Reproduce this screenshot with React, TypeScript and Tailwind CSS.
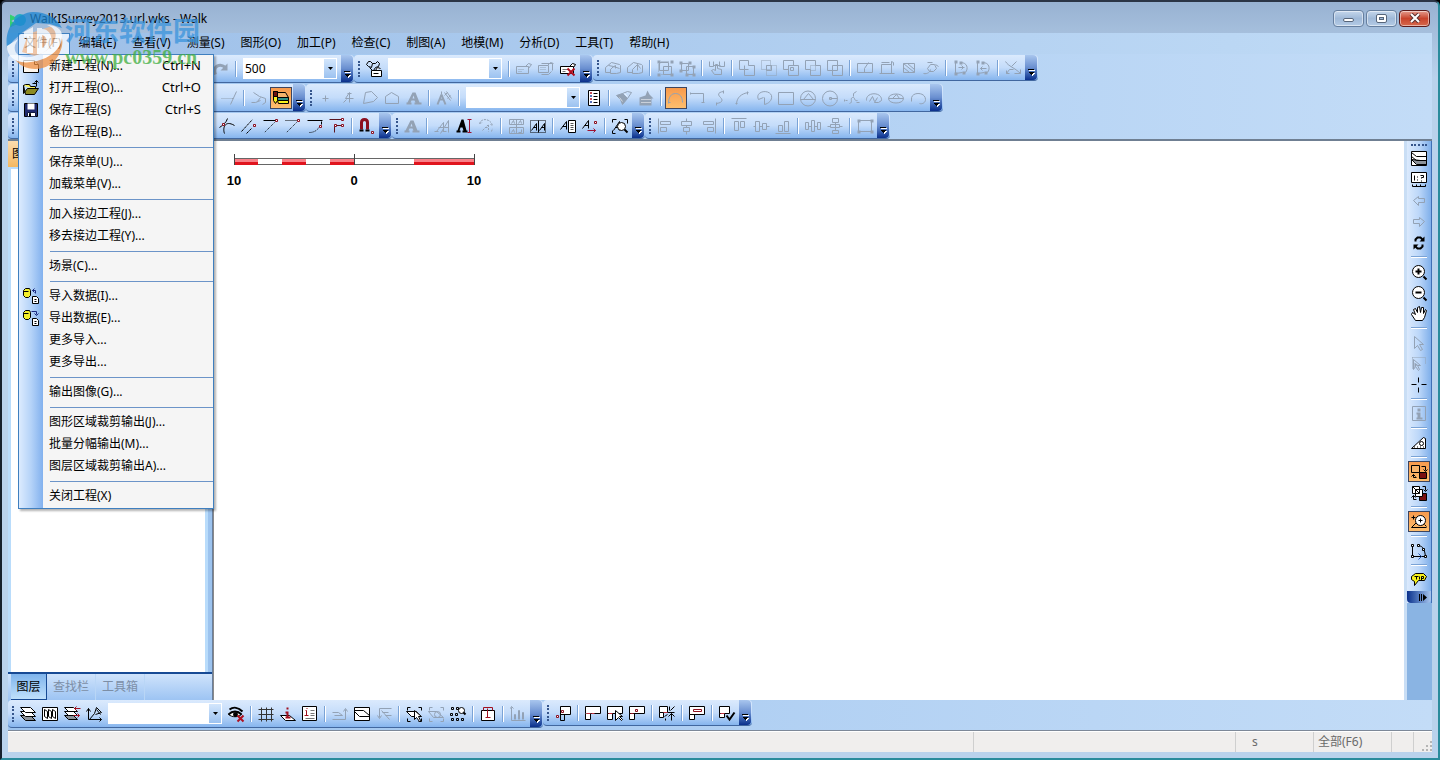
import React from 'react';
import clsx from 'clsx';

const dots = 'stroke-current [stroke-dasharray:1_1]';
const node = 'fill-white stroke-[#8b1020]';
const solid = 'fill-current stroke-none';

// All glyphs live on a 16x16 grid
const icons: Record<string, React.ReactNode> = {
  redo: (
    <>
      <path d="M2 13C-1 5 6 1 12 6" strokeWidth="3" />
      <path d="M14 2v7H7z" className={solid} />
    </>
  ),
  binoculars: (
    <>
      <path d="M0 3l2-3h2l2 2-1 4-3-1zM6 2h3l2-2 2 2-1 3-3 1M3 6l3 3M9 6L7 9" />
      <path d="M5 9h10v6H5zM9 9l2-3 3 1" className="fill-white" />
      <path d="M7 12h5" />
    </>
  ),
  card: (
    <>
      <path d="M0 5h12v7H0zM9 5l3-3 3 1-3 4" />
      <path d="M2 8h6M2 10h4" className={dots} />
    </>
  ),
  cards: (
    <>
      <path d="M0 4h10v7H0zM3 2h11v7M3 13h7l3-3M9 4l3-3 3 1" />
      <path d="M2 6h6M2 8h6" className={dots} />
    </>
  ),
  cardX: (
    <>
      <path d="M0 5h13v7H0zM9 5l3-3 3 1-2 3" className="fill-white" />
      <path d="M2 8h6M2 10h3" className="stroke-[#777]" />
      <path d="M7 7l7 7M14 7l-7 7" strokeWidth="2" className="stroke-[#b01020]" />
    </>
  ),
  house: <path d="M0 7l6-5 8 2 1 1v7l-4 1H5V9M0 7v5h5M5 9l3-3 6 2M3 5l5 1-3 3M10 8V5L7 7" />,
  house2: <path d="M0 7l6-5 8 2 1 1v7l-4 1H5V9M0 7v5h5M5 9l5-5 3 4M10 4v6" />,
  group: (
    <>
      <path d="M2 2h9v8H2zM6 6h8v8H6z" />
      <path d="M0 0h3v3H0zM13 0h3v3h-3zM0 13h3v3H0zM13 13h3v3h-3z" className={solid} />
      <path d="M1 4v8M4 1h8M4 14h8" className={dots} />
    </>
  ),
  ungroup: (
    <>
      <path d="M2 3h7v7H2zM7 6h7v8H7z" />
      <path d="M0 1h3v3H0zM9 1h3v3H9zM0 9h3v3H0zM13 5h3v3h-3zM6 13h3v3H6zM13 13h3v3h-3z" className={solid} />
    </>
  ),
  touch: <path d="M0 1v5h4V1M10 1v5h5V1M5 14L2 10l2-1 2 1V4h2v4l4 1v5zM4 5h7" />,
  union: <path d="M0 0h9v5h6v10H5V9H0zM5 5v4h4" />,
  unionDots: (
    <>
      <path d="M0 0h9v9H0zM5 5h10v10H5z" className={dots} />
      <path d="M5 5h5v5H5z" />
    </>
  ),
  subtract: (
    <>
      <path d="M0 0h10v5M0 0v9h5M5 5h10v10H5z" />
      <path d="M7 7h3v3H7z" />
    </>
  ),
  exclude: (
    <>
      <path d="M0 0h10v5h5v10H5V9H0z" />
      <path d="M5 5h5v5H5z" className={dots} />
    </>
  ),
  intersect: <path d="M0 0h10v10H0zM5 5h10v10H5z" />,
  splitBox: <path d="M0 3h15v9H0zM7 12V8l4-6" />,
  cropBox: <path d="M2 4h10v9H2zM0 13h15M12 4V1M2 2h8M12 1l2 1v3" />,
  hatch: <path d="M2 3h11v9H2zM2 3l11 9M6 3l7 6M2 7l6 5" />,
  curvePoint: <path d="M0 13c4 1 7-2 7-4M4 8l3-4h4l2 4-3 3H6zM12 4l3 2M4 2h5" />,
  pathDots: (
    <>
      <path d="M2 2v11M2 13l7-1M7 2c7 0 8 6 5 10M5 7h6M8 5l2 2-2 2" />
      <path d="M1 0h3v3H1zM6 1h3v3H6zM1 12h3v3H1zM9 11h3v3H9z" className={solid} />
    </>
  ),
  pathDots2: (
    <>
      <path d="M2 2v11M2 13l7-1M7 2c7 0 8 6 5 10M5 8h6M7 6L5 8l2 2" />
      <path d="M1 0h3v3H1zM6 1h3v3H6zM1 12h3v3H1zM9 11h3v3H9z" className={solid} />
    </>
  ),
  scatter: <path d="M0 1c3 5 9 6 15 12M6 6l5-5M1 13l3-4h4M9 13h6v-4M1 10v3h3" />,
  extend: (
    <>
      <path d="M0 8h9" className={dots} />
      <path d="M9 14l6-13M10 8h2" />
    </>
  ),
  branch: <path d="M2 2l6 4 6 2v4l-3 2M0 12h4l5-2M9 7l-3 4" />,
  layersPen: (
    <>
      <path d="M4 2h8l3 5H4z" className="fill-[#f5b26b]" />
      <path d="M4 7h11v3H4z" className="fill-[#2f8f86]" />
      <path d="M4 10h11v3H5z" className="fill-[#f8f01c]" />
      <path d="M0 1h4v9l-2 3-2-3z" className="fill-[#f8f01c]" />
      <path d="M0 1h4v5H0z" className="fill-[#6b1010]" />
    </>
  ),
  plus: <path d="M7 5v6M4 8h6" />,
  four: <path d="M9 12V2L5 8h8M7 3h4M3 12l3-3" />,
  polygon: <path d="M3 2l6-1 6 6-4 4-10 2z" />,
  pentagon: <path d="M1 13V6l6-4 7 4v7z" />,
  textA: <path d="M6 2h3l4 10h2v2H8v-2h1l-1-2H5l-1 2h1v2H0v-2h1zM6 8h2L7 5z" className={solid} />,
  compass: (
    <>
      <path d="M1 14L5 4M5 4l4 10M3 9h4" strokeWidth="2" />
      <path d="M5 1v3M8 2l6 8M10 1l5 7M8 5l3-3M11 8l3-3" />
    </>
  ),
  list: (
    <>
      <path d="M2 0h11v15H2z" className="fill-white" />
      <path d="M7 3h4M7 6h4M7 9h4M7 12h4" />
      <path d="M4 2h1v1H4zM4 8h1v1H4z" className="stroke-[#b01020]" />
      <path d="M4 5h1v1H4zM4 11h1v1H4z" className="stroke-[#2040a0]" />
    </>
  ),
  brush: (
    <>
      <path d="M0 5l6-2 5 5-5 6-2-5z" className="fill-current" />
      <path d="M6 3l5-2 4 1-4 6" />
      <path d="M8 3l3 3M3 7l3 4" className="stroke-white/60" />
    </>
  ),
  grassBox: (
    <>
      <path d="M9 0l2 4 4 4h-2v7H1V7l6-2z" className={solid} />
      <path d="M3 9h9M3 12h9" className="stroke-white [stroke-dasharray:1_1]" />
    </>
  ),
  arcOpen: <path d="M0 13c0-7 3-10 7-10s7 3 7 9M0 12h2" />,
  lineRight: <path d="M0 3h13v9M11 12h3M0 2v2" />,
  sCurve: <path d="M11 1c-7 1-5 4-3 6s3 5-4 6M4 12v3M11 0v3" />,
  arc: <path d="M2 14C2 7 7 3 14 2M1 13h2M13 1v3" />,
  pie: <path d="M7 7L2 9C-2 1 12-2 15 5c1 5-3 8-7 9V7" />,
  rect: <path d="M0 2h15v12H0z" />,
  circleTri: <path d="M0 8a7 7 0 1 0 15 0A7 7 0 1 0 0 8zM0 9h15M3 9l5-6 5 6" />,
  circleR: <path d="M0 8a7 7 0 1 0 15 0A7 7 0 1 0 0 8zM8 8h7M7 7h2v2H7z" />,
  spline: <path d="M5 13c4-1 0-5 3-6s1 4 5 3M9 3l3-2M9 3v3M1 10h2M0 9v2M12 12h3" />,
  ellipseArc: <path d="M0 10c-1-9 16-9 15 0l-3 2H8l3-5M3 11l3-5 2 5" />,
  ellipse: <path d="M0 8c0-6 15-6 15 0S0 14 0 8zM0 8h15M4 8l4-4 3 4" />,
  arcLow: <path d="M1 9c-1-8 14-8 14 0 0 3-3 5-6 4M1 8v3" />,
  curveNode: (
    <>
      <path d="M5 15C3 10 5 1 15 7M0 9c3-2 7-5 8-9" />
      <path d="M3 5h2v2H3z" className={node} />
    </>
  ),
  parallel: (
    <>
      <path d="M0 13L11 1M5 15l5-5" className="[stroke-dasharray:3_1]" />
      <path d="M12 6h2v2h-2z" className={node} />
    </>
  ),
  lineCorner: (
    <>
      <path d="M0 2h12" />
      <path d="M11 4L1 14" className={dots} />
      <path d="M12 1h2v2h-2z" className={node} />
    </>
  ),
  lineCorner2: (
    <>
      <path d="M0 2h12M11 4L1 14" className={dots} />
      <path d="M12 1h2v2h-2z" className={node} />
    </>
  ),
  lineBelow: (
    <>
      <path d="M0 2h15M14 3v3" />
      <path d="M2 14c4 0 8-2 10-6" className={dots} />
      <path d="M12 7h2v2h-2z" className={node} />
    </>
  ),
  lineStep: (
    <>
      <path d="M0 1h12M5 14V7h8" className="stroke-[#5a1520]" />
      <path d="M12 0h2v2h-2zM5 6h2v2H5zM12 6h2v2h-2z" className={node} />
    </>
  ),
  magnet: (
    <>
      <path d="M2 11V4c0-4 6-4 6 0v7" strokeWidth="3" className="stroke-[#8c1020]" />
      <path d="M0 11h4v2H0zM6 11h4v2H6z" className={solid} />
      <path d="M12 13h2v2h-2z" className={node} />
    </>
  ),
  textSlash: <path d="M0 13h4M2 13L9 4v9M4 9h5M8 13h4M6 15l8-13v12M10 9h4" />,
  textHeight: (
    <>
      <path d="M5 1h2l3 11h1v2H6v-2h1L6 9H4l-1 3h1v2H0v-2h1z" className={solid} />
      <path d="M11 1h4M11 14h4M13 1v13" className="stroke-[#a01030]" />
    </>
  ),
  textRotate: <path d="M1 5C3-1 12 0 14 7l-2-1M1 5l3-1M4 12l6-6v7M7 9h3M13 13l1-3" className="[stroke-dasharray:2_1]" />,
  textBoxes: <path d="M1 1h14v5H1zM1 9h14v6H1zM8 1v14M3 5l2-3 1 3M10 5l2-3 1 3M3 14l2-3 1 3M10 14h3v-3" />,
  textBoxes2: (
    <>
      <path d="M0 2h15v12H0z" className={dots} />
      <path d="M1 12L6 5v7M3 9h3M9 12l5-7v7M11 9h3M8 2v12" />
    </>
  ),
  textList: (
    <>
      <path d="M0 11L6 3v8M2 8h4" />
      <path d="M8 2h7v12H8z" className="fill-white" />
      <path d="M10 5h3M10 7h3M10 9h3M10 11h3" className="stroke-[#555]" />
    </>
  ),
  textArrow: (
    <>
      <path d="M0 10l6-8v8M2 7h4" />
      <path d="M5 12h8M11 10l2 2-2 2" className="stroke-[#a01030]" />
      <path d="M12 3h2v2h-2z" className={node} />
    </>
  ),
  textZoom: (
    <>
      <path d="M0 4V1h4M12 1h3v4M0 12v3h3" />
      <path d="M1 12L7 3v9M3 9h3" />
      <circle cx="9" cy="8" r="4" className="fill-white" />
      <path d="M12 11l3 3" strokeWidth="2" />
    </>
  ),
  alignLeft: <path d="M1 0v15M3 3h10v3H3zM3 9h6v4H3z" />,
  alignCenter: <path d="M7 0v3M7 7v2M7 13v3M2 3h10v4H2zM4 9h6v4H4z" />,
  alignRight: <path d="M14 0v15M2 3h10v3H2zM6 9h6v4H6z" />,
  alignTop: <path d="M0 0h15M3 3h4v9H3zM9 3h4v6H9z" />,
  alignMiddle: <path d="M0 8h2M6 8h3M13 8h3M2 3h4v10H2zM9 5h4v6H9z" />,
  alignBottom: <path d="M0 15h15M3 7h4v6H3zM9 3h4v10H9z" />,
  distributeH: <path d="M0 4h3v7H0zM6 2h3v11H6zM12 4h3v7h-3zM3 8h3M9 8h3" />,
  distributeV: <path d="M5 0h6v4H5zM3 6h9v3H3zM5 12h6v3H5zM8 4v8M0 8h3M12 8h3" />,
  boundsBox: (
    <>
      <path d="M1 2h13v11H1z" />
      <path d="M0 1h3v3H0zM13 1h3v3h-3zM0 12h3v3H0zM13 12h3v3h-3z" className={solid} />
    </>
  ),
  layers: (
    <>
      <path d="M0 9l5 5h10l-5-5z" className="fill-[#8c9299]" />
      <path d="M0 5l5 5h10l-5-5z" className="fill-white" />
      <path d="M0 1l5 5h10l-5-5z" className="fill-white" />
    </>
  ),
  layersFrame: (
    <>
      <path d="M0 0h15v14H0z" className="fill-white" />
      <path d="M0 8l5 5h10V9H9z" className="fill-[#8c9299]" />
      <path d="M0 5l5 4h10M0 1l5 4h10" />
    </>
  ),
  layersVertical: (
    <>
      <path d="M0 1h15v13H0z" className="fill-white" />
      <path d="M2 3l3 2v7l-3-2zM6 3l3 2v7l-3-2zM10 3l3 2v7l-3-2z" />
    </>
  ),
  layersRed: (
    <>
      <path d="M0 9l4 4h9l-4-4z" className="fill-[#8c9299]" />
      <path d="M0 5l4 4h9L9 5zM0 1l4 4h9L9 1z" className="fill-white" />
      <path d="M10 2h6M12 0l-2 2 2 2M9 9h6M13 7l2 2-2 2" className="stroke-[#a01020]" />
    </>
  ),
  axes: <path d="M2 2v11h13M0 5l2-3 2 3M13 11l2 2-2 2M3 13l5-6 2-6 5 5-6 2M10 3l4 5" />,
  eyeX: (
    <>
      <path d="M0 8c4-4 10-4 13 0-4 3-9 3-13 0" className="fill-white" />
      <path d="M1 3c4-3 9-2 13 2M0 8c4-4 9-4 13 0" strokeWidth="2" />
      <circle cx="7" cy="8" r="2" className="fill-black" />
      <path d="M9 9l6 6M15 9l-6 6" strokeWidth="2" className="stroke-[#b01020]" />
    </>
  ),
  grid: <path d="M3 1v14M8 1v14M13 1v14M0 3h15M0 8h15M0 13h15" className="stroke-[#333]" />,
  infoPlane: (
    <>
      <path d="M0 9h9l6 5H5z" className="fill-white" />
      <path d="M7 5v6M5 11h5M5 6h2M7 1v2" strokeWidth="2" className="stroke-[#a01020]" />
    </>
  ),
  infoList: (
    <>
      <path d="M0 0h14v14H0z" className="fill-white" />
      <path d="M4 4v5M2 9h4M3 4h1M4 2h1" className="stroke-[#a01020]" />
      <path d="M8 4h4M8 7h4M8 9h4M3 12h9" className="stroke-[#777]" />
    </>
  ),
  stepUp: <path d="M0 6h6l4 3M0 13h13V3M11 5l2-3 2 3M2 9h8" />,
  wavesFrame: (
    <>
      <path d="M0 1h15v13H0z" className="fill-white" />
      <path d="M0 4h9l6 5M0 5l5 5h10" />
    </>
  ),
  stepDown: <path d="M3 2h12M3 2v9M1 9l2 3 2-3M6 6h6M5 4l8 9M9 9h6" />,
  selectPlane: (
    <>
      <path d="M1 4V1h3M12 1h3v3M15 12v3h-3M4 15H1v-3" />
      <path d="M0 5h10l4 5H5z" className="fill-white" />
      <path d="M8 4v9l2-2 3 4 1-1-2-4h3z" className="fill-white" />
    </>
  ),
  searchPlane: (
    <>
      <path d="M1 4V1h3M12 1h3v3M15 12v3h-3M4 15H1v-3M0 5h8l7 6H5z" />
      <circle cx="9" cy="8" r="3" />
    </>
  ),
  network: (
    <>
      <circle cx="11" cy="4" r="3" className="fill-white" />
      <path d="M13 6l2 2" strokeWidth="2" />
      <path d="M1 1h2v2H1zM6 1h2v2H6zM0 7h2v2H0zM5 7h2v2H5zM1 12h2v2H1zM6 12h2v2H6zM11 12h2v2h-2z" />
    </>
  ),
  textBox: (
    <>
      <path d="M1 4h13v10H1z" className="fill-white" />
      <path d="M7 2v9M3 4V1h9v3M5 11h5" className="stroke-[#a01020]" />
    </>
  ),
  bars: <path d="M1 1v13h14M4 13V8h1v5M8 13V4h1v9M12 13V6h1v7M0 2l1-2 2 2" />,
  flagNode: (
    <>
      <path d="M5 1h10v8H5z" className="fill-white" />
      <path d="M5 5v10h4V9" />
      <path d="M6 5h2v2H6zM1 10h2v2H1z" className={node} />
    </>
  ),
  flagRed: (
    <>
      <path d="M0 1h15v7H0z" className="fill-white" />
      <path d="M0 8v6h5V8" className="fill-white" />
      <path d="M1 8h4M6 8h3" className="stroke-[#c03040]" />
    </>
  ),
  flagCursor: (
    <>
      <path d="M0 1h15v7H0zM0 8h5v6H0z" className="fill-white" />
      <path d="M8 5v10l3-3 3 3 1-1-3-3h3z" className="fill-white" />
      <path d="M1 8h4" className="stroke-[#c03040]" />
    </>
  ),
  flagPoint: (
    <>
      <path d="M0 1h15v7H0zM0 8h5v6H0z" className="fill-white" />
      <path d="M6 4h2v2H6zM1 8h3" className={node} />
    </>
  ),
  flagBurst: (
    <>
      <path d="M0 1h8v6H0zM0 7h4v5H0z" className="fill-white" />
      <path d="M10 1v4M15 1l-4 4M8 7h7M12 15V8M9 11l3-3 3 3M5 11l3-2M6 15v-2" />
      <path d="M4 7h4" className="stroke-[#c03040]" />
    </>
  ),
  flagInner: (
    <>
      <path d="M0 1h15v8H0zM0 9h5v5H0z" className="fill-white" />
      <path d="M4 4h8v2H4z" className={node} />
    </>
  ),
  flagCheck: (
    <>
      <path d="M0 1h10v7H0zM0 8h5v4H0z" className="fill-white" />
      <path d="M7 10l3 4 5-7" strokeWidth="2" />
      <path d="M1 8h4" className="stroke-[#c03040]" />
    </>
  ),
  scale: (
    <>
      <path d="M0 0h15v10H0z" className="fill-white" />
      <path d="M3 3v5M6 4v1M6 7v1M9 3h3v2h-2v1M10 8v1M1 14h13M1 12v2M5 12v2M9 12v2M14 12v2" />
    </>
  ),
  arrowLeft: <path d="M2 7l5-4v2h6v4H7v3z" />,
  arrowRight: <path d="M13 7L8 3v2H2v4h6v3z" />,
  refresh: (
    <>
      <path d="M4 6V4l2-2h3l2 2M11 9v2l-2 2H6l-2-2" strokeWidth="2" />
      <path d="M13 1v5H8zM2 14V9h5z" className={solid} />
    </>
  ),
  zoomIn: (
    <>
      <circle cx="7" cy="7" r="6" className="fill-white" />
      <path d="M4 7h6M7 4v6M12 12l3 3" strokeWidth="2" />
    </>
  ),
  zoomOut: (
    <>
      <circle cx="7" cy="7" r="6" className="fill-white" />
      <path d="M4 7h6M12 12l3 3" strokeWidth="2" />
    </>
  ),
  hand: <path d="M4 14L0 8l1-2 3 2-2-5 2-1 2 4V1l2-1 1 6 1-5h2v6l2-4 1 1-2 7-2 3z" className="fill-white" />,
  cursor: <path d="M3 1v12l3-3 3 5 2-1-3-5h4z" />,
  cursorBox: (
    <>
      <path d="M1 1h13v7M1 1v12" className={dots} />
      <path d="M2 3v10l2-3 3 4 1-1-2-4h3z" />
      <path d="M3 6v5l2-2h2z" className={solid} />
    </>
  ),
  crosshair: <path d="M7 0v5M7 10v5M0 7h5M10 7h5" />,
  info: (
    <>
      <path d="M1 0h13v14H1z" />
      <path d="M6 2h3v3H6zM5 6h4v5h2v2H5v-2h1V8H5z" className={solid} />
    </>
  ),
  setSquare: (
    <>
      <path d="M0 13L12 2l2 1v10z" className="fill-white" />
      <circle cx="10" cy="8" r="2" />
      <path d="M3 12v-1M6 12v-1M9 12v-1M12 12v-1" />
    </>
  ),
  swap: (
    <>
      <path d="M0 1h8v7H0z" className="fill-[#f7b36a]" />
      <path d="M8 8h7v6H8z" className="fill-[#7a1010]" />
      <path d="M10 2h4v4M12 5l2 2 2-2M5 13H2v-3M0 12l2-2 2 2" />
    </>
  ),
  swapLayers: (
    <>
      <path d="M8 8h7v7H8z" className="fill-[#7a1010]" />
      <path d="M4 4h7v7H4zM1 1h7v7H1z" className="fill-white" />
      <path d="M1 1l7 7M11 1h3v4M12 4l2 2 2-2M5 14H2v-4M0 12l2-2 2 2" />
    </>
  ),
  zoomPath: (
    <>
      <path d="M0 3h4M2 1v4M0 13h15M0 13l6-6" />
      <circle cx="9" cy="6" r="5" className="fill-white" />
      <path d="M7 6h4M9 4v4M13 10l2 2" />
    </>
  ),
  editPath: (
    <>
      <path d="M1 2v11h13M7 2c5 1 6 4 7 11" />
      <path d="M0 1h2v2H0zM6 1h2v2H6zM0 12h2v2H0zM13 12h2v2h-2zM11 5h2v2h-2z" className="fill-white" />
      <path d="M7 10l3 3-3 3" className="stroke-[#2050b0]" />
    </>
  ),
  tip: (
    <>
      <path d="M0 4l4-3h8l3 3-2 4H7l-4 5V9L0 7z" className="fill-[#f6ef1a]" />
      <path d="M3 4h4M5 4v3M8 4v3M10 8V4h2v2h-2" />
    </>
  ),
  newFile: (
    <>
      <path d="M0 2h11l4 4v8H0z" className="fill-[#fdf6ee]" />
      <path d="M11 2v4h4" className="fill-white" />
    </>
  ),
  openFile: (
    <>
      <path d="M0 5l2-1h4l1 2h5v3" className="fill-[#f6f05a]" />
      <path d="M0 5v8l4-5h11l-4 6H2z" className="fill-[#8c8a20]" />
      <path d="M9 3h4v3M13 0v4M11 2l2-2 2 2" />
    </>
  ),
  saveFile: (
    <>
      <path d="M1 1h13v13H1z" className="fill-[#202a70]" />
      <path d="M4 1h7v6H4z" className="fill-white stroke-none" />
      <path d="M4 10h8v4H4z" className="fill-white stroke-[#101840]" />
      <path d="M6 11h1v3H6z" className="fill-black" />
    </>
  ),
  importData: (
    <>
      <path d="M0 2l2-2h4l1 2v5L5 9H2L0 7zM0 3h5" className="fill-[#f2ee2c]" />
      <path d="M9 8h4l2 2v5H9zM11 11h2M11 13h2" className="fill-white" />
      <path d="M12 5V2H9M11 0L9 2l2 2" className="stroke-[#1a2a80]" />
    </>
  ),
  exportData: (
    <>
      <path d="M0 2l2-2h4l1 2v5L5 9H2L0 7zM0 3h5" className="fill-[#f2ee2c]" />
      <path d="M9 8h4l2 2v5H9zM11 11h2M11 13h2" className="fill-white" />
      <path d="M8 1h5v3M11 3l2 2 2-2" className="stroke-[#1a2a80]" />
    </>
  ),
};

const Icon = ({ name }: { name: string }) => (
  <svg
    viewBox="0 0 16 16"
    className="size-4 shrink-0 overflow-visible"
    fill="none"
    stroke="currentColor"
    aria-hidden="true"
  >
    <g transform="translate(.5 .5)">{icons[name]}</g>
  </svg>
);

// '|' is a separator, a leading '-' means disabled, a leading '*' means pressed
const Tools = ({ items, vertical }: { items: string; vertical?: boolean }) => (
  <>
    {items.split(' ').map((item, i) => {
      if (item === '|') {
        return vertical ? (
          <span key={i} className="flex h-2 w-full items-center px-1">
            <span className="h-0.5 w-full border-t border-[#7aa3d6] bg-white" />
          </span>
        ) : (
          <span key={i} className="flex w-2 shrink-0 items-center justify-center">
            <span className="h-4 w-0.5 border-l border-[#7aa3d6] bg-white" />
          </span>
        );
      }
      const name = item.replace(/^[-*]+/, '');
      const disabled = item.includes('-');
      const active = item.includes('*');
      return (
        <button
          key={i}
          type="button"
          aria-label={name}
          disabled={disabled}
          className={clsx(
            'flex shrink-0 items-center justify-center',
            vertical ? 'h-[21px] w-[22px]' : 'h-[22px] w-[22px]',
            disabled ? 'text-[#93a2b5]' : 'text-black',
            active && 'border border-[#3c4560] bg-linear-to-b from-[#f89a4c] to-[#fdbe6e]',
          )}
        >
          <Icon name={name} />
        </button>
      );
    })}
  </>
);

const Combo = ({ label, value = '', narrow }: { label: string; value?: string; narrow?: boolean }) => (
  <div
    className={clsx(
      'relative mx-[3px] flex h-[21px] shrink-0 border border-white bg-white',
      narrow ? 'w-[94px]' : 'w-[114px]',
    )}
  >
    <select aria-label={label} className="w-full appearance-none bg-white px-px text-xs text-black outline-none">
      <option>{value}</option>
    </select>
    <span className="pointer-events-none absolute inset-y-0 right-0 flex w-3 items-center justify-center bg-linear-to-b from-[#d3e6fc] to-[#9cc2f0]">
      <svg viewBox="0 0 5 3" className="h-[3px] w-[5px]" aria-hidden="true">
        <path d="M0 0h5L2.5 3z" />
      </svg>
    </span>
  </div>
);

const Toolbar = ({ children, tall }: { children: React.ReactNode; tall?: boolean }) => (
  <div
    role="toolbar"
    className={clsx(
      'flex shrink-0 items-center rounded border-b border-[#41679f] bg-linear-to-b from-[#dbeafd] via-[#c4dcfa] to-[#86b5ee]',
      tall ? 'h-7' : 'h-[26px]',
    )}
  >
    <span className="flex w-[9px] shrink-0 justify-center">
      <span className="h-4 border-l-2 border-dotted border-[#35558c]" />
    </span>
    {children}
    <button
      type="button"
      aria-label="Toolbar options"
      className="mx-px flex w-3 shrink-0 items-end justify-center self-stretch rounded-r bg-linear-to-b from-[#a9c6ee] via-[#6a8fd0] to-[#0a2f8c] pb-1"
    >
      <svg viewBox="0 0 7 7" className="size-[7px]" shapeRendering="crispEdges" aria-hidden="true">
        <path d="M1 1h6v1H1zM1 4h6L4 7z" className="fill-white" />
        <path d="M0 0h6v1H0zM0 3h6L3 6z" />
      </svg>
    </button>
  </div>
);

const menuBar = [
  '文件(F)',
  '编辑(E)',
  '查看(V)',
  '测量(S)',
  '图形(O)',
  '加工(P)',
  '检查(C)',
  '制图(A)',
  '地模(M)',
  '分析(D)',
  '工具(T)',
  '帮助(H)',
];

interface MenuEntry {
  label: string;
  icon?: string;
  keys?: string;
}

const fileMenu: MenuEntry[][] = [
  [
    { label: '新建工程(N)...', icon: 'newFile', keys: 'Ctrl+N' },
    { label: '打开工程(O)...', icon: 'openFile', keys: 'Ctrl+O' },
    { label: '保存工程(S)', icon: 'saveFile', keys: 'Ctrl+S' },
    { label: '备份工程(B)...' },
  ],
  [{ label: '保存菜单(U)...' }, { label: '加载菜单(V)...' }],
  [{ label: '加入接边工程(J)...' }, { label: '移去接边工程(Y)...' }],
  [{ label: '场景(C)...' }],
  [
    { label: '导入数据(I)...', icon: 'importData' },
    { label: '导出数据(E)...', icon: 'exportData' },
    { label: '更多导入...' },
    { label: '更多导出...' },
  ],
  [{ label: '输出图像(G)...' }],
  [{ label: '图形区域裁剪输出(J)...' }, { label: '批量分幅输出(M)...' }, { label: '图层区域裁剪输出A)...' }],
  [{ label: '关闭工程(X)' }],
];

const FileMenu = () => (
  <div
    role="menu"
    className="absolute top-full left-[10px] z-10 w-[196px] border border-[#3f7fbf] bg-[#f5f5f5] bg-[linear-gradient(90deg,#dcebfe,#b5d3f8_50%,#82b1ee)] bg-[length:24px_100%] bg-no-repeat pb-px shadow-[2px_2px_2px_rgba(0,0,0,0.3)]"
  >
    {fileMenu.map((group, i) => (
      <div key={i}>
        {i > 0 && (
          <div className="flex h-2 items-center pl-[31px]">
            <span className="h-px w-full bg-[#6c94c8]" />
          </div>
        )}
        {group.map(({ label, icon, keys }) => (
          <button
            key={label}
            type="button"
            role="menuitem"
            className="flex h-[22px] w-full items-center pr-3 text-left whitespace-nowrap"
          >
            <span className="flex w-[30px] shrink-0 pl-1">{icon && <Icon name={icon} />}</span>
            <span className="flex-1">{label}</span>
            {keys && <span className="text-[13px]">{keys}</span>}
          </button>
        ))}
      </div>
    ))}
  </div>
);

const Watermark = () => (
  <div className="pointer-events-none absolute top-[10px] left-1 z-20 flex items-start opacity-75">
    <svg viewBox="0 0 60 58" className="h-[58px] w-[60px]" aria-hidden="true">
      <path d="M8 46c10 16 38 15 46-6 3-7 3-12 1-17-2 12-11 20-22 22-9 2-18 3-25 1z" fill="#ee8f42" />
      <path d="M16 40l6-18 24-8 5 8c0 12-9 20-22 22z" fill="#f3b98c" />
      <path d="M1 36C-2 16 10 1 27 0c13 0 24 6 29 16L44 12 30 11 17 20 8 28z" fill="#1f87d2" />
      <path d="M1 34c0 12 10 18 24 16 17-2 31-12 31-26 0-7-6-11-15-11 8 3 10 8 8 14-3 9-13 16-25 18-10 1-17-3-15-12l3-6z" fill="#fff" />
      <path d="M18 20l9-5v26h-6V24l-3 1zM31 16h5v20c6-3 6-12 0-13v-6c12 0 14 20-2 25h-3z" fill="#fff" />
    </svg>
    <div className="-ml-px pt-px">
      <div className="text-[27px] leading-9 font-bold text-[#3a94dc]">河东软件园</div>
      <div className="font-['Liberation_Serif',serif] text-[20px] leading-4 font-bold text-[#3fae3f]">www.pc0359.cn</div>
    </div>
  </div>
);

const winButton = 'flex h-[17px] w-[31px] items-center justify-center rounded-sm border shadow-[inset_0_0_0_1px_rgba(255,255,255,0.5)]';

const TitleBar = () => (
  <header className="flex h-[31px] shrink-0 items-center px-0.5">
    <svg viewBox="0 0 16 16" className="mt-1 size-4" aria-hidden="true">
      <path d="M0 3l6 3-6 3 6 3-6 3" fill="#35d070" stroke="#35d070" />
      <circle cx="10" cy="8" r="6" fill="#23a8c4" />
    </svg>
    <h1 className="ml-1 flex-1 pt-0.5 text-xs">WalkISurvey2013.url.wks - Walk</h1>
    <div className="flex gap-[2px] pt-px">
      <button type="button" aria-label="Minimize" className={clsx(winButton, 'border-[#667f9f] bg-linear-to-b from-[#c5d7ec] via-[#9fb9d8] to-[#b4cbe6]')}>
        <span className="mt-1 h-1 w-[11px] rounded-xs border border-[#56657a] bg-white" />
      </button>
      <button type="button" aria-label="Restore" className={clsx(winButton, 'border-[#667f9f] bg-linear-to-b from-[#c5d7ec] via-[#9fb9d8] to-[#b4cbe6]')}>
        <span className="flex h-[9px] w-[11px] items-center justify-center rounded-xs border border-[#56657a] bg-white">
          <span className="h-[3px] w-[5px] border border-[#56657a] bg-[#9fb9d8]" />
        </span>
      </button>
      <button type="button" aria-label="Close" className={clsx(winButton, 'border-[#5c1a1a] bg-linear-to-b from-[#e39a8c] via-[#c8432c] to-[#d5684c]')}>
        <svg viewBox="0 0 12 10" className="h-[10px] w-3" aria-hidden="true">
          <path d="M2 1l8 8M10 1L2 9" stroke="#5a3030" strokeWidth="4" />
          <path d="M2 1l8 8M10 1L2 9" stroke="#fff" strokeWidth="2" />
        </svg>
      </button>
    </div>
  </header>
);

const SidePanel = () => (
  <aside className="flex w-[205px] shrink-0 flex-col border-r border-[#6a7f9c] bg-[#9cc3ee]">
    <h2 className="h-[26px] w-[197px] bg-linear-to-b from-[#fbdcae] to-[#f4b860] px-1 text-xs leading-[26px]">图层</h2>
    <div className="mr-1 flex-1 border-x-3 border-t-2 border-[#b9dcfb] bg-white" />
    <div className="flex h-7 border-t-2 border-[#174a94] bg-linear-to-b from-[#cfe3fb] to-[#9dc4f3] pl-[3px]">
      {['图层', '查找栏', '工具箱'].map((tab, i) => (
        <button
          key={tab}
          type="button"
          className={clsx(
            'border-r text-xs',
            i === 0
              ? 'w-9 border-b border-[#174a94] bg-linear-to-b from-[#7fb4ec] to-[#bfe0fb] text-black'
              : 'w-[49px] border-[#b9d6f6] text-[#7c8ea6]',
          )}
        >
          {tab}
        </button>
      ))}
    </div>
  </aside>
);

const ScaleBar = () => (
  <svg
    viewBox="0 0 280 48"
    className="h-12 w-[280px] font-['Liberation_Sans',sans-serif] text-[13px] font-bold"
  >
    <path d="M20 17.5h240M20 23.5h240" stroke="#666" fill="none" />
    {[20, 68, 116].map((x) => (
      <React.Fragment key={x}>
        <rect x={x} y="18" width="24" height="3" fill="#f88088" />
        <rect x={x} y="21" width="24" height="3" fill="#e0141e" />
      </React.Fragment>
    ))}
    <rect x="200" y="18" width="60" height="3" fill="#f88088" />
    <rect x="200" y="21" width="60" height="3" fill="#e0141e" />
    <path d="M20.5 13v11M140.5 13v11M260.5 13v11" stroke="#444" fill="none" />
    <g textAnchor="middle">
      <text x="20" y="44">10</text>
      <text x="140" y="44">0</text>
      <text x="260" y="44">10</text>
    </g>
  </svg>
);

const RightToolbar = () => (
  <div className="flex w-[25px] shrink-0 flex-col bg-[#8ab4e3]">
    <div
      role="toolbar"
      className="flex flex-col items-center border-r border-[#3f6fb5] bg-linear-to-r from-[#dbeafd] via-[#bcd7f9] to-[#7fafea]"
    >
      <span className="mt-[3px] mb-0.5 w-4 border-t-2 border-dotted border-[#35558c]" />
      <Tools
        vertical
        items="layersFrame scale -arrowLeft -arrowRight refresh | zoomIn zoomOut hand | -cursor -cursorBox crosshair | -info | setSquare | *swap swapLayers | *zoomPath | editPath | tip"
      />
      <button
        type="button"
        aria-label="Toolbar options"
        className="mt-px flex h-3 w-full items-center justify-end rounded-b bg-linear-to-r from-[#0a2f8c] to-[#a9c6ee] pr-1"
      >
        <svg viewBox="0 0 8 7" className="h-[7px] w-2" aria-hidden="true">
          <path d="M0 0h1v7H0zM2 0h1v7H2zM4 0l4 3.5L4 7z" />
        </svg>
      </button>
    </div>
  </div>
);

const App: React.FC = () => {
  return (
    <div className="bg-black">
      <div className="relative flex h-screen min-h-[640px] flex-col rounded-t-md border-2 border-r-[#2a8b9c] border-b-[#2a8b9c] border-l-[#16202c] border-t-[#2b3546] bg-[#b5cfe9] bg-linear-to-b from-[#98b2d2] to-[#b9d2ec] to-10% px-[6px] pb-[6px] font-['Noto_Sans','Noto_Sans_CJK_SC',sans-serif] text-xs text-black">
        <TitleBar />
        <nav className="relative flex h-[21px] shrink-0 bg-linear-to-r from-[#9dbfe8] to-[#c0dbf6] pl-[10px]">
          {menuBar.map((item, i) => (
            <button
              key={item}
              type="button"
              className={clsx(
                'px-2 pb-0.5 leading-4',
                i === 0 && 'border border-b-0 border-[#3f7fbf] bg-[#e4effc] pl-[5px]',
              )}
            >
              {item}
            </button>
          ))}
          <FileMenu />
        </nav>

        <div className="flex shrink-0 flex-col gap-px overflow-hidden border-b-2 border-[#6f7f92] bg-linear-to-r from-[#9dc3ee] to-[#c3dcf7] pt-px">
          <div className="flex items-start">
            <Toolbar tall>
              <span className="w-[193px]" />
              <Tools items="-redo |" />
              <Combo label="Scale" value="500" narrow />
            </Toolbar>
            <Toolbar tall>
              <Tools items="binoculars" />
              <Combo label="Search" />
              <Tools items="| -card -cards cardX" />
            </Toolbar>
            <Toolbar>
              <Tools items="-house -house2 | -group -ungroup | -touch | -union -unionDots -subtract -exclude -intersect | -splitBox -cropBox -hatch -curvePoint | -pathDots -pathDots2 | -scatter" />
            </Toolbar>
          </div>
          <div className="flex items-start">
            <Toolbar tall>
              <span className="w-[201px]" />
              <Tools items="-extend | -branch *layersPen" />
            </Toolbar>
            <Toolbar tall>
              <Tools items="-plus -four -polygon -pentagon -textA | -compass |" />
              <Combo label="Feature" />
              <Tools items="list | -brush -grassBox | *-arcOpen -lineRight -sCurve -arc -pie -rect -circleTri -circleR -spline -ellipseArc -ellipse -arcLow" />
            </Toolbar>
          </div>
          <div className="flex items-start">
            <Toolbar>
              <span className="w-[199px]" />
              <Tools items="curveNode parallel lineCorner lineCorner2 lineBelow lineStep | magnet" />
            </Toolbar>
            <Toolbar>
              <Tools items="-textA | -textSlash textHeight -textRotate | -textBoxes textBoxes2 | textList textArrow | textZoom" />
            </Toolbar>
            <Toolbar>
              <Tools items="-alignLeft -alignCenter -alignRight | -alignTop -alignMiddle -alignBottom | -distributeH -distributeV | -boundsBox" />
            </Toolbar>
          </div>
        </div>

        <div className="flex min-h-0 flex-1">
          <SidePanel />
          <main className="flex-1 border-l border-[#8a8a8a] bg-white">
            <ScaleBar />
          </main>
          <div className="w-[3px] shrink-0 bg-[#c9def5]" />
          <RightToolbar />
        </div>

        <div className="flex shrink-0 items-start overflow-hidden border-b border-[#7d8898] bg-linear-to-r from-[#9dc3ee] to-[#c3dcf7] pb-0.5">
          <Toolbar tall>
            <Tools items="layers layersVertical layersRed axes" />
            <Combo label="Layer" />
            <Tools items="eyeX | grid infoPlane infoList | -stepUp wavesFrame -stepDown | selectPlane -searchPlane network | textBox | -bars" />
          </Toolbar>
          <Toolbar>
            <Tools items="flagNode | flagRed flagCursor flagPoint | flagBurst | flagInner | flagCheck" />
          </Toolbar>
        </div>

        <footer className="flex h-[21px] shrink-0 border-t border-white bg-[#f0eeed] leading-5 text-[#6a6a6a]">
          <span className="flex-1" />
          <span className="w-[262px] border-l border-[#cfcfcf]" />
          <span className="w-[78px] border-l border-[#cfcfcf] pl-4">s</span>
          <span className="w-[78px] border-l border-[#cfcfcf] pl-1">全部(F6)</span>
          <span className="w-[22px] border-l border-[#cfcfcf]" />
          <span className="flex w-[19px] items-end justify-end border-l border-[#cfcfcf] pb-px">
            <svg viewBox="0 0 10 10" className="size-[10px] fill-[#b5b5b5]" aria-hidden="true">
              <path d="M8 0h2v2H8zM4 4h2v2H4zM8 4h2v2H8zM0 8h2v2H0zM4 8h2v2H4zM8 8h2v2H8z" />
            </svg>
          </span>
        </footer>
        <Watermark />
      </div>
    </div>
  );
};

export default App;
